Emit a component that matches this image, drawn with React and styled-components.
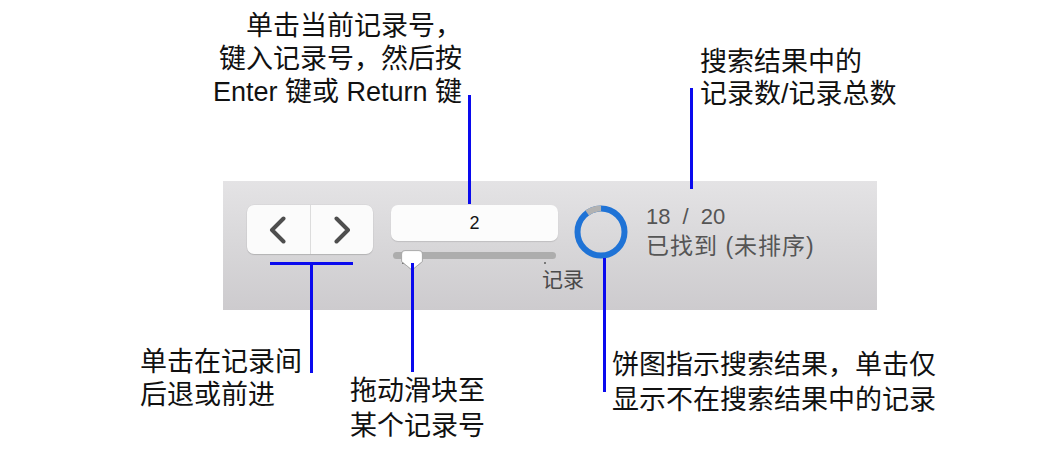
import React from 'react'
import styled, { createGlobalStyle } from 'styled-components'

const GlobalStyle = createGlobalStyle`
  html, body {
    margin: 0;
    padding: 0;
    background: #ffffff;
  }
  body {
    font-family: 'Liberation Sans', 'Noto Sans CJK SC', sans-serif;
  }
`

const FONT = `'Liberation Sans', 'Noto Sans CJK SC', sans-serif`
const BLUE = '#0a0aee'

const App = () => {
  return (
    <Canvas>
      <GlobalStyle />
      <Toolbar>
        <NavGroup>
          <NavButton aria-label="上一条">
            <Chevron dir="left" />
          </NavButton>
          <NavButton aria-label="下一条">
            <Chevron dir="right" />
          </NavButton>
        </NavGroup>

        <SliderColumn>
          <RecordField>2</RecordField>
          <Track>
            <Thumb viewBox="0 0 22 21" width="22" height="21">
              <path
                d="M4 0.6 H18 Q21.4 0.6 21.4 4 V11.5 L11 20 L0.6 11.5 V4 Q0.6 0.6 4 0.6 Z"
                fill="#ffffff"
                stroke="#a8a8a8"
                strokeWidth="0.9"
              />
            </Thumb>
          </Track>
          <Ticks>
            <Tick />
            <Tick />
          </Ticks>
          <SliderLabel>记录</SliderLabel>
        </SliderColumn>

        <PieButton aria-label="饼图">
          <svg viewBox="0 0 54 54" width="54" height="54">
            <circle cx="27" cy="27" r="23.5" fill="none" stroke="#1f73d6" strokeWidth="6" />
            <circle
              cx="27"
              cy="27"
              r="23.5"
              fill="none"
              stroke="#b2b2b2"
              strokeWidth="6"
              strokeDasharray="14.77 147.65"
              transform="rotate(-126 27 27)"
            />
          </svg>
        </PieButton>

        <StatusText>
          <Count>18 / 20</Count>
          <Found>已找到 (未排序)</Found>
        </StatusText>
      </Toolbar>

      <VLine x={468} top={95} bottom={204} />
      <VLine x={690} top={88} bottom={189} />
      <HLine left={270} right={353} y={262} />
      <VLine x={310} top={262} bottom={373} />
      <VLine x={411} top={263} bottom={372} />
      <VLine x={603} top={258} bottom={392} />

      <Callout right={579} top={10} align="right" lh={33}>
        单击当前记录号，<br />
        键入记录号，然后按<br />
        Enter 键或 Return 键
      </Callout>
      <Callout left={700} top={46} lh={32}>
        搜索结果中的<br />
        记录数/记录总数
      </Callout>
      <Callout left={140} top={346} lh={33}>
        单击在记录间<br />
        后退或前进
      </Callout>
      <Callout left={350} top={374} lh={35}>
        拖动滑块至<br />
        某个记录号
      </Callout>
      <Callout left={612} top={348} lh={35}>
        饼图指示搜索结果，单击仅<br />
        显示不在搜索结果中的记录
      </Callout>
    </Canvas>
  )
}

const Chevron = ({ dir }) => (
  <svg viewBox="0 0 20 28" width="20" height="28">
    <polyline
      points={dir === 'left' ? '15.5,2.5 4,14 15.5,25.5' : '4.5,2.5 16,14 4.5,25.5'}
      fill="none"
      stroke="#4e4e4e"
      strokeWidth="4"
      strokeLinecap="round"
      strokeLinejoin="round"
    />
  </svg>
)

export default App

const Canvas = styled.div`
  position: relative;
  width: 1041px;
  height: 456px;
  padding: 181px 0 0 223px;
  box-sizing: border-box;
  overflow: hidden;
  font-family: ${FONT};
`

const Toolbar = styled.div`
  display: flex;
  flex-direction: row;
  align-items: flex-start;
  width: 654px;
  height: 129px;
  box-sizing: border-box;
  padding: 24px 0 0 24px;
  background: linear-gradient(to bottom, #e4e3e5 0%, #d8d7d9 50%, #cdcbce 100%);
`

const NavGroup = styled.div`
  display: flex;
  width: 126px;
  height: 49px;
  border-radius: 7px;
  background: #fbfbfb;
  box-shadow: 0 1px 1px rgba(0, 0, 0, 0.14), 0 0 0 0.5px rgba(0, 0, 0, 0.05);
  overflow: hidden;
`

const NavButton = styled.div`
  flex: 1;
  display: flex;
  align-items: center;
  justify-content: center;
  & + & {
    border-left: 1px solid #dcdcdc;
  }
`

const SliderColumn = styled.div`
  display: flex;
  flex-direction: column;
  width: 167px;
  margin-left: 18px;
`

const RecordField = styled.div`
  height: 36px;
  border-radius: 7px;
  background: #fcfcfc;
  box-shadow: 0 1px 1px rgba(0, 0, 0, 0.12);
  display: flex;
  align-items: center;
  justify-content: center;
  font-size: 18px;
  color: #151515;
`

const Track = styled.div`
  position: relative;
  height: 7px;
  margin: 11px 2px 0;
  border-radius: 4px;
  background: #adadad;
`

const Thumb = styled.svg`
  position: absolute;
  left: 8px;
  top: -2px;
  filter: drop-shadow(0 0.5px 0.6px rgba(0, 0, 0, 0.25));
`

const Ticks = styled.div`
  display: flex;
  justify-content: space-between;
  padding: 0 12px 0 11px;
  margin-top: 3px;
`

const Tick = styled.span`
  width: 2px;
  height: 2px;
  background: #7a7a7a;
`

const SliderLabel = styled.div`
  padding-left: 151px;
  margin-top: 4px;
  white-space: nowrap;
  font-size: 21px;
  line-height: 24px;
  color: #4a4a4a;
`

const PieButton = styled.div`
  width: 54px;
  height: 54px;
  margin-left: 16px;
  svg {
    display: block;
  }
`

const StatusText = styled.div`
  display: flex;
  flex-direction: column;
  margin-left: 18px;
  margin-top: -1px;
  color: #555555;
  white-space: nowrap;
`

const Count = styled.div`
  font-size: 22px;
  line-height: 26px;
  word-spacing: 6px;
`

const Found = styled.div`
  font-size: 23px;
  line-height: 32px;
  letter-spacing: 1px;
`

const VLine = styled.div`
  position: absolute;
  left: ${(p) => p.x}px;
  top: ${(p) => p.top}px;
  width: 3px;
  height: ${(p) => p.bottom - p.top}px;
  background: ${BLUE};
`

const HLine = styled.div`
  position: absolute;
  left: ${(p) => p.left}px;
  top: ${(p) => p.y}px;
  width: ${(p) => p.right - p.left}px;
  height: 3px;
  background: ${BLUE};
`

const Callout = styled.div`
  position: absolute;
  top: ${(p) => p.top}px;
  ${(p) => (p.left !== undefined ? `left: ${p.left}px;` : '')}
  ${(p) => (p.right !== undefined ? `right: ${p.right}px;` : '')}
  text-align: ${(p) => p.align || 'left'};
  white-space: nowrap;
  font-size: 27px;
  line-height: ${(p) => p.lh}px;
  color: #111111;
`
